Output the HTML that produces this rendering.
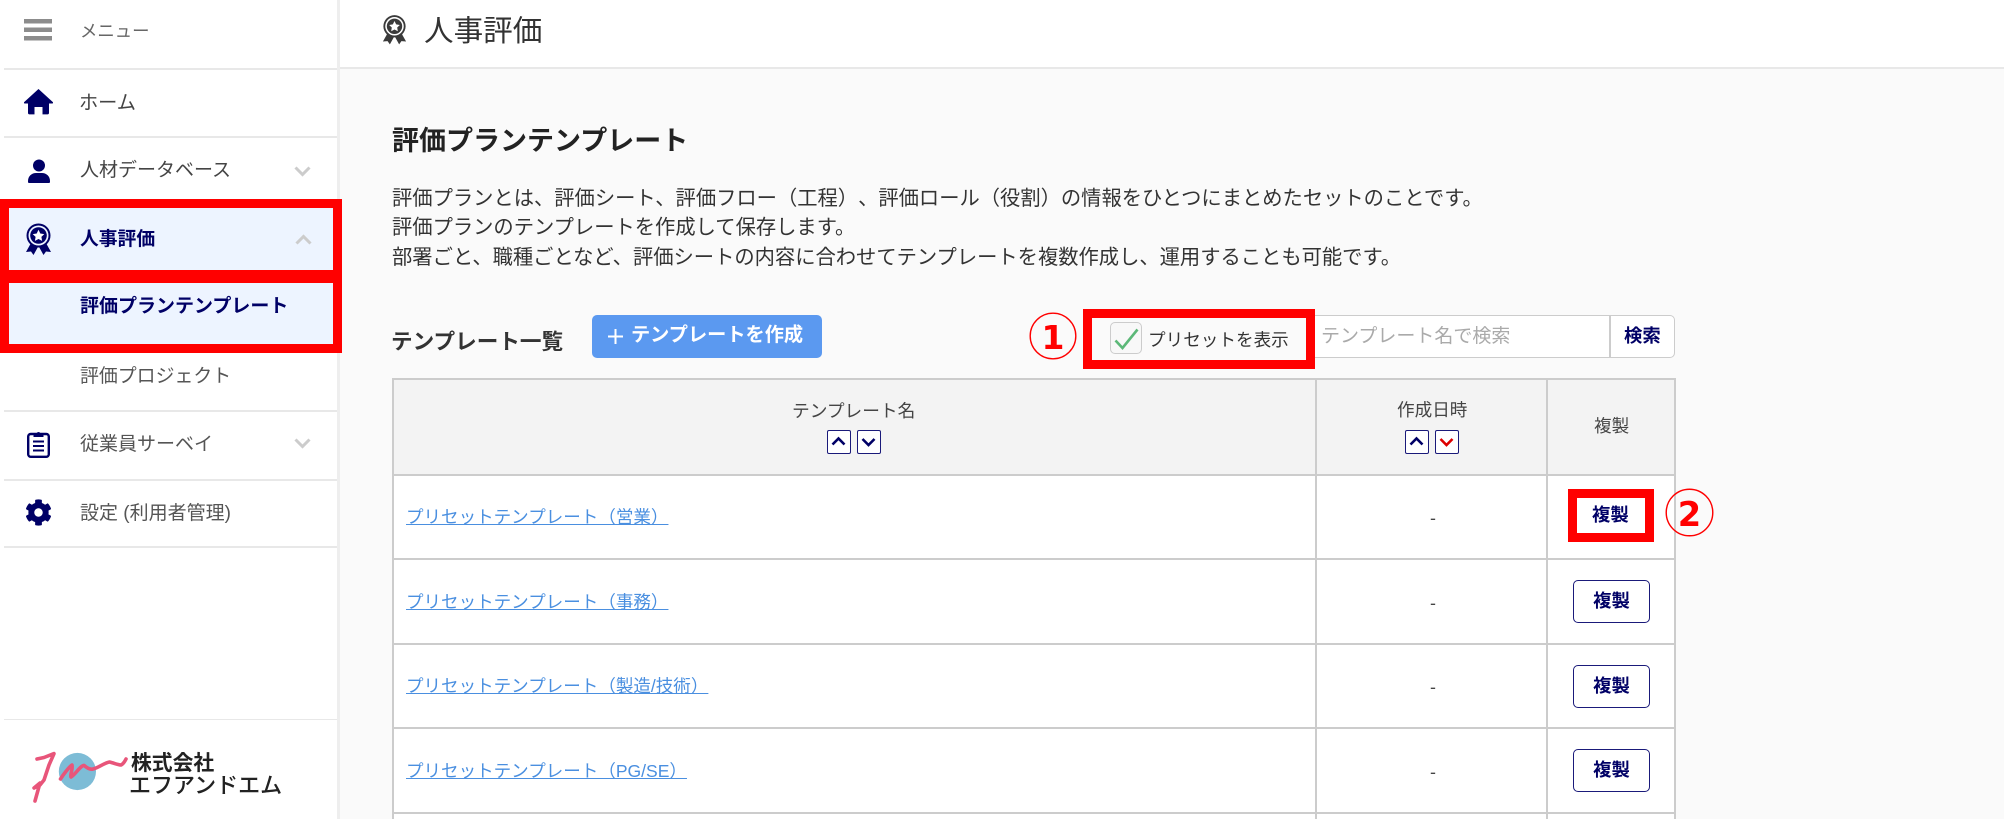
<!DOCTYPE html>
<html lang="ja"><head><meta charset="utf-8"><title>評価プランテンプレート</title>
<style>
html,body{margin:0;padding:0}
body{position:relative;width:2004px;height:819px;overflow:hidden;background:#fafafa;font-family:"Liberation Sans","Noto Sans CJK JP",sans-serif;color:#333;text-spacing-trim:space-all}
.a{position:absolute;box-sizing:border-box}
.t{position:absolute;white-space:nowrap;line-height:40px;height:40px}
.l{position:absolute;background:#e8e8e8}
.g{background:#ccc;position:absolute}
.b{font-weight:700}
.n{color:#000066}
.lnk{color:#4a8fe0;text-decoration:underline;text-decoration-thickness:1.3px;font-size:17.55px;left:406px}
.dash{left:1430px;font-size:17.9px;color:#444}
.btn{position:absolute;left:1573px;width:77px;height:43px;border:1.5px solid #1a1a7a;border-radius:5px;background:#fff;color:#000066;font-weight:700;font-size:18.4px;text-align:center;line-height:39px;box-sizing:border-box}
.sort{position:absolute;top:430px;width:24px;height:24px;border:1.5px solid #1a1a7a;border-radius:2px;background:#fff;box-sizing:border-box}
.sort svg{display:block;width:21px;height:21px}
svg{position:absolute;display:block}
.sort svg{position:static}
</style></head><body>
<div class="a" style="left:0;top:0;width:340px;height:819px;background:#fff;border-right:3px solid #eee"></div>
<div class="a" style="left:340px;top:0;width:1664px;height:69px;background:#fff;border-bottom:2px solid #e8e8e8"></div>
<div class="l" style="left:4px;top:68px;width:333px;height:2px"></div>
<div class="l" style="left:4px;top:136px;width:333px;height:2px"></div>
<div class="l" style="left:4px;top:410px;width:333px;height:2px"></div>
<div class="l" style="left:4px;top:479px;width:333px;height:2px"></div>
<div class="l" style="left:4px;top:546px;width:333px;height:2px"></div>
<div class="l" style="left:4px;top:719px;width:333px;height:1px"></div>

<!-- active sidebar with red highlight -->
<div class="a" style="left:0;top:199px;width:342px;height:80px;background:#edf4ff;border:9px solid #f00"></div>
<div class="a" style="left:0;top:274px;width:342px;height:79px;background:#edf4ff;border:9px solid #f00"></div>

<svg style="left:24px;top:19px" width="28" height="22" viewBox="0 0 28 22" fill="#8c8c8c"><rect y="0" width="28" height="4.5"/><rect y="8.5" width="28" height="4.5"/><rect y="17" width="28" height="4.5"/></svg>
<div class="t" style="left:80px;top:11px;font-size:17.4px;color:#666">メニュー</div>

<svg style="left:24px;top:89px" width="29" height="26" viewBox="0 0 29 26" fill="#000066"><path d="M14.5 0L29 13.2c.4.6 0 1.3-.7 1.3H25v9.5c0 .8-.6 1.4-1.4 1.4H18.5V18h-8v7.4H5.4C4.6 25.4 4 24.8 4 24v-9.5H.7c-.7 0-1.1-.7-.7-1.3z"/></svg>
<div class="t" style="left:79px;top:84px;font-size:19.2px;color:#444">ホーム</div>

<svg style="left:28px;top:159px" width="22" height="24" viewBox="0 0 22 24" fill="#000066"><circle cx="11" cy="6.5" r="6"/><path d="M1 24c-1 0-1-1-1-2 0-5 4-8 8-8h6c4 0 8 3 8 8 0 1 0 2-1 2z"/></svg>
<div class="t" style="left:80px;top:151px;font-size:19px;color:#444">人材データベース</div>
<svg style="left:294px;top:166px" width="17" height="11" viewBox="0 0 17 11" fill="none" stroke="#ccc" stroke-width="3"><path d="M1.5 1.5l7 7 7-7"/></svg>

<svg style="left:25px;top:223px" width="27" height="32" viewBox="0 0 27 32"><path d="M6 20L1 29l5-.5 2.5 3.5 5-9 5 9 2.5-3.5 5 .5-5-9z" fill="#000066"/><circle cx="13.5" cy="12.5" r="12" fill="#000066"/><circle cx="13.5" cy="12.5" r="10" fill="#edf4ff"/><circle cx="13.5" cy="12.5" r="8.3" fill="#000066"/><path d="M13.5 6.8l1.8 3.7 4 .6-2.9 2.8.7 4-3.6-1.9-3.6 1.9.7-4-2.9-2.8 4-.6z" fill="#fff"/></svg>
<div class="t b n" style="left:80px;top:219px;font-size:18.8px">人事評価</div>
<svg style="left:295px;top:234px" width="17" height="11" viewBox="0 0 17 11" fill="none" stroke="#ccc" stroke-width="3"><path d="M1.5 9.5l7-7 7 7"/></svg>

<div class="t b n" style="left:80px;top:287px;font-size:19px">評価プランテンプレート</div>
<div class="t" style="left:80px;top:357px;font-size:18.9px;color:#555">評価プロジェクト</div>

<svg style="left:27px;top:430px" width="23" height="28" viewBox="0 0 23 28"><rect x="1.2" y="4" width="20.6" height="22.8" rx="2.5" fill="#fff" stroke="#000066" stroke-width="2.4"/><path d="M7 6V3.5h3a1.6 1.6 0 0 1 3 0h3V6.5H7z" fill="#000066" stroke="#000066"/><path d="M6 11.5h11M6 16h11M6 20.5h11" stroke="#000066" stroke-width="2"/></svg>
<div class="t" style="left:80px;top:425px;font-size:19px;color:#555">従業員サーベイ</div>
<svg style="left:294px;top:438px" width="17" height="11" viewBox="0 0 17 11" fill="none" stroke="#ccc" stroke-width="3"><path d="M1.5 1.5l7 7 7-7"/></svg>

<svg style="left:25px;top:499px" width="27" height="27" viewBox="0 0 512 512" fill="#000066"><path d="M487.4 315.7l-42.6-24.6c4.3-23.2 4.3-47 0-70.2l42.6-24.6c4.9-2.8 7.1-8.6 5.5-14-11.1-35.6-30-67.8-54.7-94.6-3.8-4.1-10-5.1-14.8-2.3L380.8 110c-17.9-15.4-38.5-27.3-60.8-35.1V25.8c0-5.6-3.9-10.5-9.4-11.7-36.7-8.2-74.3-7.8-109.2 0-5.5 1.2-9.4 6.1-9.4 11.7V75c-22.2 7.9-42.8 19.8-60.8 35.1L88.7 85.5c-4.9-2.8-11-1.9-14.8 2.3-24.7 26.7-43.6 58.9-54.7 94.6-1.7 5.4.6 11.2 5.5 14L67.3 221c-4.3 23.2-4.3 47 0 70.2l-42.6 24.6c-4.9 2.8-7.1 8.6-5.5 14 11.1 35.6 30 67.8 54.7 94.6 3.8 4.1 10 5.1 14.8 2.3l42.6-24.6c17.9 15.4 38.5 27.3 60.8 35.1v49.2c0 5.6 3.9 10.5 9.4 11.7 36.7 8.2 74.3 7.8 109.2 0 5.5-1.2 9.4-6.1 9.4-11.7v-49.2c22.2-7.9 42.8-19.8 60.8-35.1l42.6 24.6c4.9 2.8 11 1.9 14.8-2.3 24.7-26.7 43.6-58.9 54.7-94.6 1.5-5.5-.7-11.3-5.6-14.1zM256 336c-44.1 0-80-35.9-80-80s35.9-80 80-80 80 35.9 80 80-35.9 80-80 80z"/></svg>
<div class="t" style="left:80px;top:494px;font-size:19px;color:#555">設定 (利用者管理)</div>

<!-- logo -->
<svg style="left:30px;top:748px" width="102" height="56" viewBox="0 0 102 56"><circle cx="47.4" cy="23.5" r="18.6" fill="#7dbcd6"/><path d="M7 11L14 9.5 24 5.6 19 17 14 32 10 37 4 40 10 35 5 53M30.5 31C33 27 39 19 42 17 43 21 40 27 41 29 45 27 50 18 54 17.4 57 20 60 22 63 21 68 20 74 15 79.5 14 84 15 88 17 91 17 93 16 95 13 96 11" fill="none" stroke="#e8557a" stroke-width="3.6" stroke-linecap="round" stroke-linejoin="round"/></svg>
<div class="t b" style="left:131px;top:744px;font-size:20.8px;color:#222">株式会社</div>
<div class="t" style="left:129px;top:766px;font-size:22px;font-weight:500;color:#222">エフアンドエム</div>

<!-- top -->
<svg style="left:382px;top:14px" width="25" height="31" viewBox="0 0 27 32"><path d="M6 20L1 29l5-.5 2.5 3.5 5-9 5 9 2.5-3.5 5 .5-5-9z" fill="#3a3a3a"/><circle cx="13.5" cy="12.5" r="12" fill="#3a3a3a"/><circle cx="13.5" cy="12.5" r="10" fill="#fff"/><circle cx="13.5" cy="12.5" r="8.3" fill="#3a3a3a"/><path d="M13.5 6.8l1.8 3.7 4 .6-2.9 2.8.7 4-3.6-1.9-3.6 1.9.7-4-2.9-2.8 4-.6z" fill="#fff"/></svg>
<div class="t" style="left:424px;top:12px;font-size:29.6px;color:#333">人事評価</div>

<div class="t b" style="left:392px;top:121px;font-size:27px;color:#222">評価プランテンプレート</div>
<div class="t" style="left:392px;top:179px;font-size:20.3px;color:#333">評価プランとは、評価シート、評価フロー（工程）、評価ロール（役割）の情報をひとつにまとめたセットのことです。</div>
<div class="t" style="left:392px;top:208px;font-size:20.3px;color:#333">評価プランのテンプレートを作成して保存します。</div>
<div class="t" style="left:392px;top:238px;font-size:20.3px;color:#333">部署ごと、職種ごとなど、評価シートの内容に合わせてテンプレートを複数作成し、運用することも可能です。</div>

<div class="t b" style="left:391px;top:322px;font-size:21.6px;color:#333">テンプレート一覧</div>
<div class="a" style="left:592px;top:315px;width:230px;height:43px;background:#5b99f0;border-radius:5px"></div>
<svg style="left:608px;top:329px" width="15" height="15" viewBox="0 0 15 15" stroke="#fff" stroke-width="2"><path d="M7.5 0v15M0 7.5h15"/></svg>
<div class="t b" style="left:631px;top:316px;font-size:19.2px;color:#fff">テンプレートを作成</div>

<!-- search -->
<div class="a" style="left:1300px;top:315px;width:375px;height:43px;background:#fff;border:1.5px solid #ccc;border-radius:5px"></div>
<div class="a" style="left:1609px;top:315px;width:1.5px;height:43px;background:#ccc"></div>
<div class="t" style="left:1321px;top:317px;font-size:19px;color:#aaa">テンプレート名で検索</div>
<div class="t b n" style="left:1624px;top:316px;font-size:18.4px">検索</div>

<!-- preset -->
<div class="a" style="left:1083px;top:309px;width:232px;height:60px;background:#fafafa;border:9px solid #f00"></div>
<div class="a" style="left:1110px;top:322px;width:32px;height:32px;background:#f8f8f8;border:1.5px solid #ccc;border-radius:5px"></div>
<svg style="left:1114px;top:328px" width="25" height="22" viewBox="0 0 25 22" fill="none" stroke="#5cb878" stroke-width="2.6"><path d="M1.5 12.5l7 7.5L23.5 1.5"/></svg>
<div class="t" style="left:1148px;top:320px;font-size:17.6px;color:#333">プリセットを表示</div>
<svg style="left:1029px;top:312px" width="48" height="48" viewBox="0 0 48 48"><circle cx="24" cy="24" r="22.8" fill="none" stroke="#f00" stroke-width="1.4"/><text x="24" y="37" text-anchor="middle" font-family="DejaVu Sans" font-weight="700" font-size="33" fill="#f00">1</text></svg>

<!-- table -->
<div class="a" style="left:392px;top:378px;width:1283px;height:441px;background:#fff"></div>
<div class="a" style="left:392px;top:378px;width:1283px;height:96px;background:#f3f3f3"></div>
<div class="g" style="left:392px;top:378px;width:1283px;height:2px"></div>
<div class="g" style="left:392px;top:474px;width:1283px;height:2px"></div>
<div class="g" style="left:392px;top:558px;width:1283px;height:2px"></div>
<div class="g" style="left:392px;top:643px;width:1283px;height:2px"></div>
<div class="g" style="left:392px;top:727px;width:1283px;height:2px"></div>
<div class="g" style="left:392px;top:812px;width:1283px;height:2px"></div>
<div class="g" style="left:392px;top:378px;width:2px;height:441px"></div>
<div class="g" style="left:1315px;top:378px;width:2px;height:441px"></div>
<div class="g" style="left:1546px;top:378px;width:2px;height:441px"></div>
<div class="g" style="left:1674px;top:378px;width:2px;height:441px"></div>

<div class="t" style="left:792px;top:391px;font-size:17.7px;color:#444">テンプレート名</div>
<div class="sort" style="left:827px"><svg viewBox="0 0 21 21" fill="none" stroke="#000066" stroke-width="2.6"><path d="M4.5 13.5l6-6 6 6"/></svg></div>
<div class="sort" style="left:857px"><svg viewBox="0 0 21 21" fill="none" stroke="#000066" stroke-width="2.6"><path d="M4.5 8l6 6 6-6"/></svg></div>
<div class="t" style="left:1397px;top:390px;font-size:17.6px;color:#444">作成日時</div>
<div class="sort" style="left:1405px"><svg viewBox="0 0 21 21" fill="none" stroke="#000066" stroke-width="2.6"><path d="M4.5 13.5l6-6 6 6"/></svg></div>
<div class="sort" style="left:1435px"><svg viewBox="0 0 21 21" fill="none" stroke="#dd0000" stroke-width="2.6"><path d="M4.5 8l6 6 6-6"/></svg></div>
<div class="t" style="left:1594px;top:406px;font-size:17.6px;color:#444">複製</div>

<div class="t lnk" style="top:497px">プリセットテンプレート（営業）</div>
<div class="t lnk" style="top:582px">プリセットテンプレート（事務）</div>
<div class="t lnk" style="top:666px">プリセットテンプレート（製造/技術）</div>
<div class="t lnk" style="top:751px">プリセットテンプレート（PG/SE）</div>
<div class="t dash" style="top:498px">-</div>
<div class="t dash" style="top:583px">-</div>
<div class="t dash" style="top:667px">-</div>
<div class="t dash" style="top:752px">-</div>

<div class="a" style="left:1568px;top:489px;width:86px;height:53px;background:#fff;border:9px solid #f00"></div>
<div class="t b n" style="left:1592px;top:495px;font-size:18.4px">複製</div>
<div class="btn" style="top:580px">複製</div>
<div class="btn" style="top:665px">複製</div>
<div class="btn" style="top:749px">複製</div>
<svg style="left:1665px;top:488px" width="49" height="49" viewBox="0 0 48 48"><circle cx="24" cy="24" r="22.8" fill="none" stroke="#f00" stroke-width="1.4"/><text x="24" y="37" text-anchor="middle" font-family="DejaVu Sans" font-weight="700" font-size="33" fill="#f00">2</text></svg>
</body></html>
